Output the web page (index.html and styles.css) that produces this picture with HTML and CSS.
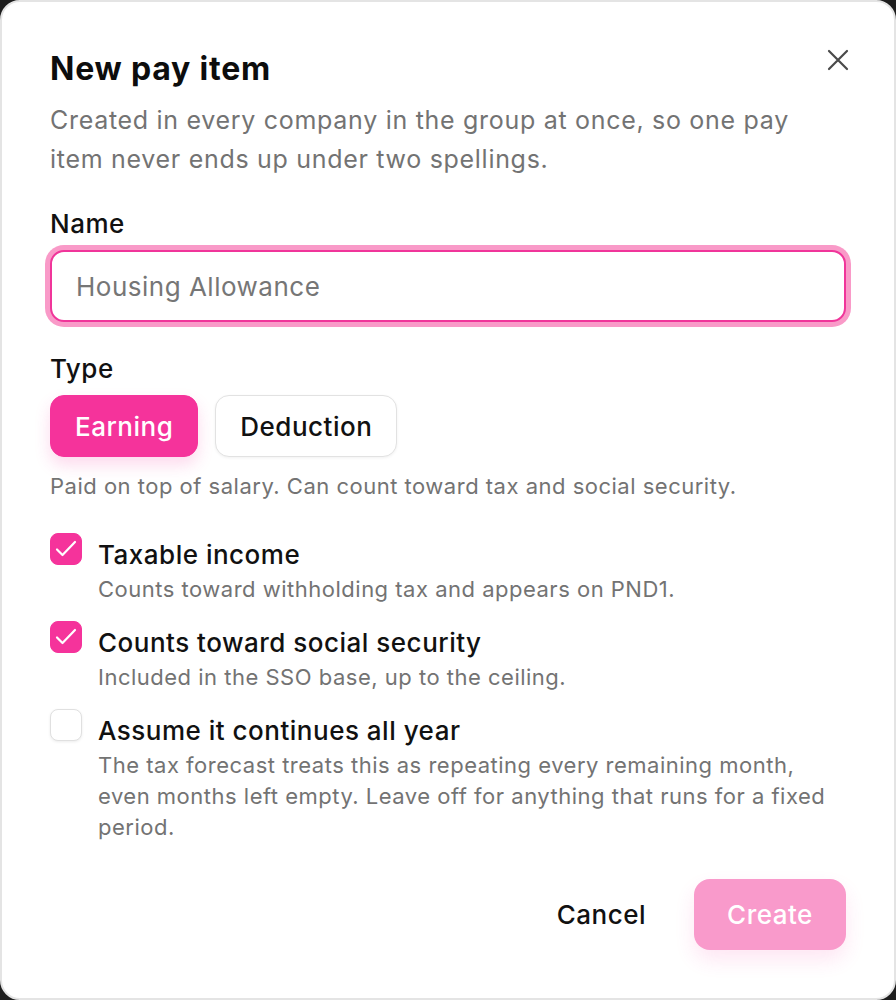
FILE: index.html
```html
<!DOCTYPE html>
<html>
  <head>
    <link rel="stylesheet" href="styles.css">
  </head>
  <body>
    <div class="dialog">
      <div class="dialogHeader">
        <h2 class="dialogTitle">New pay item</h2>
        <button class="closeBtn" aria-label="Close">
          <svg width="24" height="24" viewBox="0 0 24 24" fill="none" stroke="#4a4a4a" stroke-width="2.2" stroke-linecap="round">
            <path d="M3 3L21 21M21 3L3 21"/>
          </svg>
        </button>
      </div>
      <p class="dialogDesc">Created in every company in the group at once, so one pay item never ends up under two spellings.</p>

      <label class="fieldLabel" for="payName">Name</label>
      <input class="textInput" id="payName" type="text" placeholder="Housing Allowance">

      <div class="fieldLabel typeLabel">Type</div>
      <div class="segmented">
        <button class="segBtn active">Earning</button>
        <button class="segBtn">Deduction</button>
      </div>
      <div class="hint">Paid on top of salary. Can count toward tax and social security.</div>

      <div class="checkList">
        <div class="checkRow">
          <span class="checkBox checked">
            <svg width="32" height="32" viewBox="0 0 32 32" fill="none" stroke="#fff" stroke-width="2.2" stroke-linecap="round" stroke-linejoin="round"><path d="M7 16.5L12.5 22L25 9"/></svg>
          </span>
          <div class="checkText">
            <div class="checkLabel">Taxable income</div>
            <div class="checkSub">Counts toward withholding tax and appears on PND1.</div>
          </div>
        </div>
        <div class="checkRow">
          <span class="checkBox checked">
            <svg width="32" height="32" viewBox="0 0 32 32" fill="none" stroke="#fff" stroke-width="2.2" stroke-linecap="round" stroke-linejoin="round"><path d="M7 16.5L12.5 22L25 9"/></svg>
          </span>
          <div class="checkText">
            <div class="checkLabel">Counts toward social security</div>
            <div class="checkSub">Included in the SSO base, up to the ceiling.</div>
          </div>
        </div>
        <div class="checkRow">
          <span class="checkBox"></span>
          <div class="checkText">
            <div class="checkLabel">Assume it continues all year</div>
            <div class="checkSub">The tax forecast treats this as repeating every remaining month, even months left empty. Leave off for anything that runs for a fixed period.</div>
          </div>
        </div>
      </div>

      <div class="dialogFooter">
        <button class="cancelBtn">Cancel</button>
        <button class="createBtn" disabled>Create</button>
      </div>
    </div>
  </body>
</html>
```

FILE: styles.css
```css
html, body {
  margin: 0;
  padding: 0;
  background-color: #1e1e1e;
}

body {
  font-family: Inter, "Noto Sans", sans-serif;
  color: #111;
}

.dialog {
  box-sizing: border-box;
  width: 896px;
  height: 1000px;
  background-color: #fff;
  border: 2px solid #e4e4e4;
  border-radius: 20px;
  padding: 47px 48px 48px 48px;
  display: flex;
  flex-direction: column;
}

.dialogHeader {
  display: flex;
  justify-content: space-between;
  align-items: flex-start;
}

.dialogTitle {
  margin: 0;
  font-size: 32px;
  line-height: 40px;
  font-weight: 700;
  letter-spacing: 0.8px;
  color: #0d0d0d;
}

.closeBtn {
  border: none;
  background: none;
  padding: 0;
  margin: -1px -4px 0 0;
  cursor: pointer;
  width: 24px;
  height: 24px;
}

.closeBtn svg {
  display: block;
}

.dialogDesc {
  margin: 12px 0 0 0;
  font-size: 25px;
  line-height: 39px;
  letter-spacing: 0.7px;
  color: #737373;
}

.fieldLabel {
  display: block;
  margin-top: 29px;
  font-size: 26px;
  line-height: 32px;
  letter-spacing: 0.5px;
  font-weight: 500;
  color: #111;
}

.typeLabel {
  margin-top: 31px;
}

.textInput {
  box-sizing: border-box;
  margin-top: 10px;
  width: 100%;
  height: 72px;
  border: 2px solid #f0359a;
  border-radius: 14px;
  box-shadow: 0 0 0 5px #f99ac8;
  padding: 0 24px;
  font-family: inherit;
  font-size: 26px;
  letter-spacing: 0.5px;
  color: #111;
  outline: none;
}

.textInput::placeholder {
  color: #767676;
}

.segmented {
  display: flex;
  gap: 17px;
  margin-top: 10px;
}

.segBtn {
  height: 62px;
  padding: 0 24px;
  border-radius: 14px;
  border: 1.5px solid #e2e2e2;
  background-color: #fff;
  font-family: inherit;
  font-size: 26px;
  letter-spacing: 0.5px;
  font-weight: 500;
  color: #111;
  box-shadow: 0 1px 3px rgba(0, 0, 0, 0.06);
  cursor: pointer;
}

.segBtn.active {
  background-color: #f5339b;
  border-color: #f5339b;
  color: #fff;
  box-shadow: 0 8px 16px rgba(245, 51, 155, 0.18);
}

.hint {
  margin-top: 15px;
  font-size: 22px;
  line-height: 28px;
  letter-spacing: 0.5px;
  color: #737373;
}

.checkList {
  margin-top: 33px;
  display: flex;
  flex-direction: column;
  gap: 16px;
}

.checkRow {
  display: flex;
  gap: 16px;
  align-items: flex-start;
}

.checkBox {
  box-sizing: border-box;
  flex: none;
  width: 32px;
  height: 32px;
  border-radius: 8px;
  border: 1.5px solid #e0e0e0;
  background-color: #fff;
  box-shadow: 0 1px 3px rgba(0, 0, 0, 0.08);
  display: flex;
  align-items: center;
  justify-content: center;
}

.checkBox.checked {
  background-color: #f5339b;
  border-color: #f5339b;
  box-shadow: none;
}

.checkBox svg {
  display: block;
  flex: none;
}

.checkLabel {
  margin-top: 7px;
  font-size: 26px;
  line-height: 30px;
  letter-spacing: 0.5px;
  font-weight: 500;
  color: #111;
}

.checkSub {
  margin-top: 4px;
  font-size: 22px;
  line-height: 31px;
  letter-spacing: 0.5px;
  color: #737373;
}

.dialogFooter {
  margin-top: auto;
  display: flex;
  justify-content: flex-end;
  gap: 16px;
}

.cancelBtn {
  height: 71px;
  padding: 0 32px;
  border: none;
  background: none;
  font-family: inherit;
  font-size: 26px;
  letter-spacing: 0.5px;
  font-weight: 500;
  color: #111;
  cursor: pointer;
}

.createBtn {
  height: 71px;
  width: 152px;
  border: none;
  border-radius: 16px;
  background-color: #f99acb;
  font-family: inherit;
  font-size: 26px;
  letter-spacing: 0.5px;
  font-weight: 500;
  color: #fff;
  box-shadow: 0 10px 20px rgba(245, 51, 155, 0.12);
}
```
